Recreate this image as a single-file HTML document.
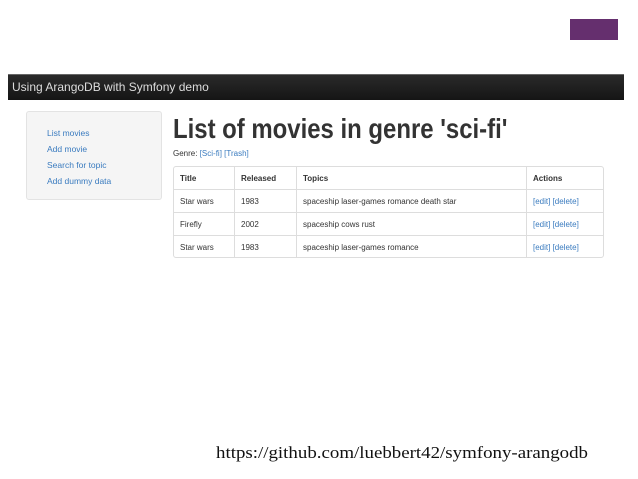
<!DOCTYPE html>
<html><head><meta charset="utf-8"><style>
body{margin:0;width:638px;height:479px;background:#fff;position:relative;overflow:hidden;font-family:"Liberation Sans",sans-serif}
.a{position:absolute}
.lk{color:#3a7bbf}
table{border-collapse:separate;border-spacing:0;font-size:8px;color:#333}
td{border-right:1px solid #ddd;border-top:1px solid #ddd;padding:0 0 0 6px;height:22px}
tr:first-child td{border-top:none;font-weight:bold}
td:last-child{border-right:none}
</style></head><body>
<div class="a" style="left:570px;top:19px;width:48px;height:21px;background:#652f6e"></div>
<div class="a" style="left:8px;top:74px;width:616px;height:25px;background:linear-gradient(#2a2a2a,#151515);border-top:1px solid #666"></div>
<div class="a" style="left:12px;top:80px;color:#ddd;font-size:12px">Using ArangoDB with Symfony demo</div>
<div class="a" style="left:26px;top:111px;width:134px;height:87px;background:#f5f5f5;border:1px solid #e3e3e3;border-radius:3px"></div>
<div class="a lk" style="left:47px;top:125px;font-size:8.5px;line-height:16px">List movies<br>Add movie<br>Search for topic<br>Add dummy data</div>
<div class="a" style="left:173px;top:113px;font-size:27.5px;font-weight:bold;color:#333;transform:scaleX(0.87);transform-origin:0 0;white-space:nowrap">List of movies in genre 'sci-fi'</div>
<div class="a" style="left:173px;top:149px;font-size:8px;color:#333">Genre: <span class="lk">[Sci-fi]</span> <span class="lk">[Trash]</span></div>
<div class="a" style="left:173px;top:166px;width:429px;height:90px;border:1px solid #ddd;border-radius:3px;overflow:hidden">
<table style="width:429px">
<tr><td style="width:54px;height:22px">Title</td><td style="width:55px">Released</td><td style="width:223px">Topics</td><td>Actions</td></tr>
<tr><td>Star wars</td><td>1983</td><td>spaceship laser-games romance death star</td><td><span class="lk">[edit] [delete]</span></td></tr>
<tr><td>Firefly</td><td>2002</td><td>spaceship cows rust</td><td><span class="lk">[edit] [delete]</span></td></tr>
<tr><td>Star wars</td><td>1983</td><td>spaceship laser-games romance</td><td><span class="lk">[edit] [delete]</span></td></tr>
</table></div>
<svg class="a" style="left:0;top:0" width="638" height="479"><text x="216" y="458" font-family="Liberation Serif, serif" font-size="17" fill="#111" textLength="372" lengthAdjust="spacingAndGlyphs">https://github.com/luebbert42/symfony-arangodb</text></svg>
</body></html>
